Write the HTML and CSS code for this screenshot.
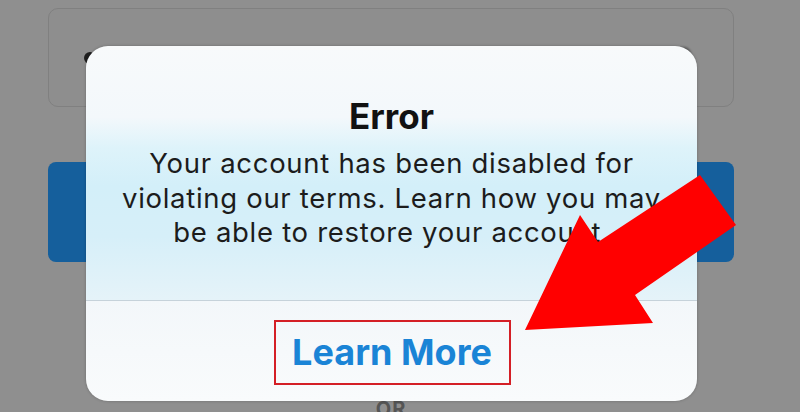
FILE: index.html
```html
<!DOCTYPE html>
<html>
<head>
<meta charset="utf-8">
<link rel="stylesheet" href="styles.css">
</head>
<body>
<div class="screen">
  <div class="form">
    <div class="field">
      <span class="dot dot-left"></span>
      <span class="dot dot-right"></span>
    </div>
    <div class="login-btn"></div>
    <div class="or">OR</div>
  </div>

  <div class="alert">
    <div class="alert-body">
      <h1 class="alert-title">Error</h1>
      <p class="alert-text">Your account has been disabled for<br>violating our terms. Learn how you may<br>be able to restore your account.</p>
    </div>
    <div class="alert-footer">
      <span class="alert-action">Learn More</span>
    </div>
  </div>

  <svg class="arrow" width="800" height="412" viewBox="0 0 800 412">
    <polygon points="700,175 736,225 635,295 653,323 525,330 580,215 598,242" fill="#ff0000"/>
  </svg>
</div>
</body>
</html>
```

FILE: styles.css
```css
html, body {
  margin: 0;
  padding: 0;
}
body {
  width: 800px;
  height: 412px;
  overflow: hidden;
  background: #8f8f8f;
  font-family: Inter, "Liberation Sans", Arial, sans-serif;
}
.screen {
  position: relative;
  width: 800px;
  height: 412px;
  overflow: hidden;
}
.form {
  display: flex;
  flex-direction: column;
  align-items: center;
  padding: 8px 66px 0 48px;
  gap: 55px;
}
.field {
  position: relative;
  width: 684px;
  height: 97px;
  border: 1px solid #808080;
  border-radius: 10px;
  background: #8e8e8e;
}
.dot {
  position: absolute;
  width: 12px;
  height: 12px;
  border-radius: 50%;
  background: #1f1f1f;
}
.dot-left { left: 35px; top: 43px; }
.dot-right { left: 628px; top: 38px; width: 14px; height: 14px; background: #5e5e5e; filter: blur(1px); }
.login-btn {
  width: 686px;
  height: 100px;
  border-radius: 8px;
  background: #155f9c;
}
.or {
  margin-top: 82px;
  font-size: 20px;
  line-height: 20px;
  font-weight: 700;
  color: #555;
  letter-spacing: 1px;
}
.alert {
  position: absolute;
  left: 86px;
  top: 46px;
  width: 611px;
  height: 355px;
  border-radius: 22px;
  overflow: hidden;
  display: flex;
  flex-direction: column;
  box-shadow: 0 0 3px rgba(0,0,0,0.25);
}
.alert-body {
  height: 255px;
  box-sizing: border-box;
  padding-top: 49px;
  text-align: center;
  background: linear-gradient(to bottom, #f8fafb 0%, #f3f8fb 28%, #def3fa 40%, #d3eff9 55%, #d6eff9 75%, #e5f3f9 100%);
  border-bottom: 1px solid #c6d2da;
}
.alert-title {
  margin: 0;
  font-size: 35px;
  line-height: 42px;
  font-weight: 700;
  color: #121212;
}
.alert-text {
  margin: 9px 0 0;
  font-size: 27.5px;
  line-height: 34.5px;
  letter-spacing: 0.7px;
  color: #1c1c1c;
}
.alert-footer {
  flex: 1;
  display: flex;
  align-items: center;
  justify-content: center;
  background: linear-gradient(to bottom, #f3f7fa, #f9fbfc);
  padding-top: 3px;
}
.alert-action {
  display: inline-block;
  box-sizing: border-box;
  width: 237px;
  height: 65px;
  line-height: 61px;
  text-align: center;
  border: 2px solid #d41f26;
  font-size: 36px;
  font-weight: 700;
  color: #1a84d6;
  margin-left: 1px;
}
.arrow {
  position: absolute;
  left: 0;
  top: 0;
}
```
